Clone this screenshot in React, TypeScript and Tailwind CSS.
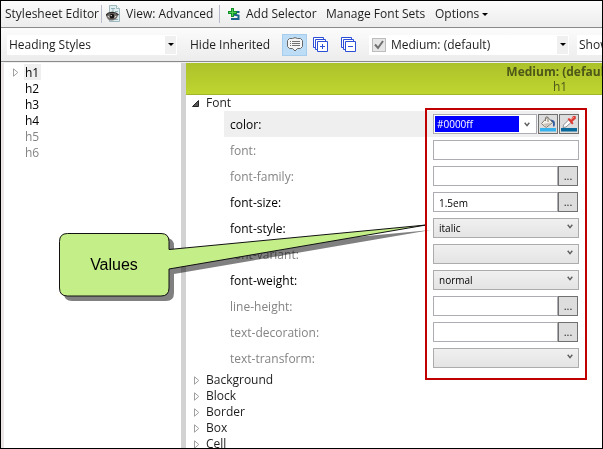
import React from "react";

type Kind = "color" | "text" | "dots" | "select";

interface Property {
  name: string;
  kind: Kind;
  value?: string;
  set?: boolean;
}

const properties: Property[] = [
  { name: "color", kind: "color", value: "#0000ff", set: true },
  { name: "font", kind: "text" },
  { name: "font-family", kind: "dots" },
  { name: "font-size", kind: "dots", value: "1.5em", set: true },
  { name: "font-style", kind: "select", value: "italic", set: true },
  { name: "font-variant", kind: "select" },
  { name: "font-weight", kind: "select", value: "normal", set: true },
  { name: "line-height", kind: "dots" },
  { name: "text-decoration", kind: "dots" },
  { name: "text-transform", kind: "select" },
];

const groups = ["Background", "Block", "Border", "Box", "Cell"];

const selectors = [
  { name: "h1", set: true, selected: true },
  { name: "h2", set: true },
  { name: "h3", set: true },
  { name: "h4", set: true },
  { name: "h5" },
  { name: "h6" },
];

function DownArrow() {
  return (
    <svg width="6" height="3" viewBox="0 0 6 3" className="shrink-0" aria-hidden="true">
      <path d="M0 0h6L3 3z" fill="#000" />
    </svg>
  );
}

function Chevron() {
  return (
    <svg width="6" height="5" viewBox="0 0 6 5" fill="none" className="shrink-0" aria-hidden="true">
      <path d="M.7.7 3 3.7 5.3.7" stroke="#606060" strokeWidth="1.4" />
    </svg>
  );
}

function Expander() {
  return (
    <svg width="6" height="9" viewBox="0 0 6 9" fill="none" className="shrink-0" aria-hidden="true">
      <path d="M.5.8v7.4L4.8 4.5z" fill="#fff" stroke="#959595" strokeWidth=".9" />
    </svg>
  );
}

function EyePageIcon() {
  return (
    <svg width="16" height="18" viewBox="0 0 16 18" aria-hidden="true">
      <path d="M3.500.5h7l3 3v13h-10z" fill="#e2eff1" stroke="#9db9bf" />
      <path d="M10.500.5v3h3" fill="#fff" stroke="#9db9bf" />
      <path d="M5 3.500h4M7 3.500v4M9 6.500h3M9 14.500h3" stroke="#8fb0b8" />
      <path d="M0 10.500C2 7.500 9 6 12 10.500c-1 3.500-3.500 5-6.500 5S1 13.500 0 10.500z" fill="#6f6b68" />
      <path d="M0 10.500C2 6.800 9 6 12.500 10" fill="none" stroke="#2b2725" strokeWidth="1.300" />
      <path d="M1.500 11.500q4.500-3 9 0-4 4-9 0z" fill="#e8e6e2" />
      <circle cx="6" cy="11.300" r="2.500" fill="#171513" />
      <circle cx="5.200" cy="10.600" r=".7" fill="#fff" />
    </svg>
  );
}

function AddSelectorIcon() {
  return (
    <svg width="12" height="13" viewBox="0 0 12 13" fill="none" aria-hidden="true">
      <path d="M11.500 4H6.500L5.500 6.500l5 1v3.500H3" stroke="#17618a" strokeWidth="2" />
      <path d="M3 0h3v3h3v3H6v3H3V6H0V3h3z" fill="#129128" />
      <path d="M4 1h1v3h3v1H5v3H4V5H1V4h3z" fill="#50ce55" />
    </svg>
  );
}

function NoteIcon() {
  return (
    <svg width="16" height="15" viewBox="0 0 16 15" fill="none" className="shrink-0" aria-hidden="true">
      <path d="M2.500 1.500h3L8 .6l2.500.9h3l2 2v6l-2 2h-3L8 14l-2.500-2.500h-3l-2-2v-6z" fill="#f5f5f5" stroke="#686868" />
      <path d="M3 4.500h1m1 0h8M3 6.500h1m1 0h8M3 8.500h1m1 0h8" stroke="#737373" />
    </svg>
  );
}

function StackIcon({ plus }: { plus?: boolean }) {
  return (
    <svg width="16" height="16" viewBox="0 0 16 16" fill="none" stroke="#2c4fd8" aria-hidden="true">
      <path d="M.5.5h10v10H.5z" fill="#fff" />
      <path d="M2.500 2.500h10v10h-10z" fill="#fff" />
      <path d="M4.500 4.500h10v10h-10z" fill="#fff" />
      <path d="M7 9.500h5" />
      {plus && <path d="M9.500 7v5" />}
    </svg>
  );
}

function BucketIcon() {
  return (
    <svg width="16" height="16" viewBox="0 0 16 16" fill="none" className="shrink-0" aria-hidden="true">
      <path d="M10 3.500q4 0 4.800 2.500.6 3-.8 5-1.500-1-1-3.500z" fill="#315fa5" />
      <path d="M1.500 7.500 7.500 1l5 5.500-6 4.800q-1.500 0-5-3.800z" fill="#f5f1e8" stroke="#827b72" />
      <path d="m3 8 8-1.500-4.500 4z" fill="#c9c2b8" />
      <path d="M5.500 5V1.500q1.500-1.500 2.500 0V6" stroke="#817b75" />
      <path d="M0 12h16v3.500H0z" fill="#36b3ed" />
    </svg>
  );
}

function DropperIcon() {
  return (
    <svg width="16" height="16" viewBox="0 0 16 16" fill="none" className="shrink-0" aria-hidden="true">
      <path d="m2 11.500.5-2.500L8 3.500l2.500 2.500L5 11z" fill="#fff" stroke="#8b9298" />
      <path d="m6.500 3 1.500-1 2 1.500L12 0h2.500L15 2.500l-3.500 3 1 2-1.500 1z" fill="#dd3c35" />
      <path d="m10 3.500 3-2.500" stroke="#f79a8d" />
      <path d="M0 12h16v3.500H0z" fill="#08699b" />
    </svg>
  );
}

function ValueEditor({ property }: { property: Property }) {
  const { name, kind, value } = property;
  if (kind === "color") {
    return (
      <div className="flex min-w-0 flex-1 gap-px">
        <div className="flex h-5 min-w-0 flex-1 border border-[#abadb3] bg-white p-px">
          <input
            id={name}
            defaultValue={value}
            className="min-w-0 flex-1 bg-[#0000ff] px-0.5 pt-px text-[10px] text-white outline-none"
          />
          <button aria-label="Choose color" className="flex w-4 items-center justify-center">
            <Chevron />
          </button>
        </div>
        <button
          aria-label="Fill color"
          className="flex h-5 w-5 items-center justify-center border border-[#707070] bg-[#dddddd]"
        >
          <BucketIcon />
        </button>
        <button
          aria-label="Pick color"
          className="flex h-5 w-5 items-center justify-center border border-[#707070] bg-[#dddddd]"
        >
          <DropperIcon />
        </button>
      </div>
    );
  }
  if (kind === "select") {
    return (
      <div className="relative min-w-0 flex-1">
        <select
          id={name}
          defaultValue={value ?? ""}
          className="block h-5 w-full appearance-none border border-[#acacac] bg-linear-to-b from-[#f0f0f0] to-[#e4e4e4] px-[5px] pt-px text-[10px] text-black outline-none"
        >
          <option value={value ?? ""}>{value ?? ""}</option>
        </select>
        <span className="pointer-events-none absolute top-1.5 right-1.5">
          <Chevron />
        </span>
      </div>
    );
  }
  return (
    <div className={kind === "dots" ? "flex min-w-0 flex-1 pr-px" : "flex min-w-0 flex-1"}>
      <input
        id={name}
        defaultValue={value}
        className="h-5 min-w-0 flex-1 border border-[#abadb3] bg-white px-[5px] pt-px text-[10px] text-black outline-none"
      />
      {kind === "dots" && (
        <button
          aria-label={"More " + name}
          className="h-5 w-5 border border-[#707070] bg-[#dddddd] text-[11px] leading-4"
        >
          ...
        </button>
      )}
    </div>
  );
}

function Callout() {
  return (
    <div className="pointer-events-none absolute -top-px -left-px">
      <svg width="603" height="449" viewBox="0 0 603 449" className="mix-blend-multiply" aria-hidden="true">
        <path
          transform="translate(5 5)"
          d="M67 233H161q8 0 8 8v8L426 225 169 269v19q0 8-8 8H67q-8 0-8-8V241q0-8 8-8z"
          fill="#808080"
        />
      </svg>
      <svg width="603" height="449" viewBox="0 0 603 449" className="absolute top-0 left-0" aria-hidden="true">
        <path
          d="M67.500 233.500H161q8 0 8 8v8L426 225 169 269v19q0 8-8 8H67.500q-8 0-8-8V241.500q0-8 8-8z"
          fill="#c4ee88"
          stroke="#111"
        />
        <path d="M426 109h160v270H426z" fill="none" stroke="#c00000" strokeWidth="2" />
      </svg>
      <p className="absolute top-[233px] left-[59px] flex h-[63px] w-[110px] items-center justify-center font-['Liberation_Sans',Arial,sans-serif] text-base text-black">
        Values
      </p>
    </div>
  );
}

export default function App() {
  return (
    <div className="relative isolate flex h-screen flex-col overflow-hidden border border-black bg-white font-['Open_Sans','Segoe_UI',sans-serif] text-xs whitespace-nowrap text-[#1e1e1e]">
      <header className="flex h-[27px] shrink-0 items-center border-b border-[#8a8a8a] bg-linear-to-b from-[#fcfcfc] to-[#ececec] pl-1">
        <h1 className="w-24">Stylesheet Editor</h1>
        <span className="h-[18px] w-px bg-[#b9bccb]" />
        <button className="flex w-[117px] items-center gap-1 pl-1">
          <EyePageIcon />
          View: Advanced
        </button>
        <span className="h-[18px] w-px bg-[#b9bccb]" />
        <button className="flex w-[106px] items-center gap-1.5 pl-2">
          <AddSelectorIcon />
          Add Selector
        </button>
        <button className="w-[109px] text-left">Manage Font Sets</button>
        <button className="flex items-center gap-[3px]">
          Options
          <DownArrow />
        </button>
      </header>

      <div className="flex h-[34px] shrink-0 items-center border-b border-[#8a8a8a] bg-linear-to-b from-[#fcfcfc] to-[#ececec] pl-1.5">
        <button className="flex h-5 w-[170px] items-center justify-between bg-white pr-px pl-0.5">
          Heading Styles
          <span className="flex h-[18px] w-[11px] items-center justify-center bg-[#f0f0f0]">
            <DownArrow />
          </span>
        </button>
        <button className="w-[105px] pl-[13px] text-left">Hide Inherited</button>
        <button
          aria-label="Show comments"
          className="flex h-[22px] w-[25px] items-center justify-center border border-[#a6cdee] bg-[#bddcf5]"
        >
          <NoteIcon />
        </button>
        <button aria-label="Expand all" className="ml-1.5 w-7">
          <StackIcon plus />
        </button>
        <button aria-label="Collapse all" className="w-7">
          <StackIcon />
        </button>
        <div className="flex h-5 w-[200px] shrink-0 items-center bg-white pr-px pl-[3px]">
          <input
            id="medium"
            type="checkbox"
            defaultChecked
            className="h-[14px] w-[14px] appearance-none border border-[#bcbcbc] bg-[#e6e6e6]"
          />
          <svg width="14" height="14" viewBox="0 0 14 14" className="pointer-events-none -ml-[14px]" fill="none" aria-hidden="true">
            <path d="m3 6.500 3 3.500 5-7" stroke="#707070" strokeWidth="2" />
          </svg>
          <label htmlFor="medium" className="flex-1 pl-[5px]">
            Medium: (default)
          </label>
          <button aria-label="Choose medium" className="flex h-[18px] w-[11px] items-center justify-center bg-[#f0f0f0]">
            <DownArrow />
          </button>
        </div>
        <button className="ml-2 flex h-5 min-w-0 flex-1 items-center overflow-hidden bg-white pl-0.5">Show</button>
      </div>

      <main className="flex min-h-0 flex-1 border-t border-[#f0f0f0]">
        <nav className="w-[185px] shrink-0 border-r-[5px] border-l-[3px] border-r-[#d2d2d2] border-l-[#ebe7e7]">
          <ul className="pt-px pl-[9px]">
            {selectors.map((s) => (
              <li key={s.name} className="flex h-4 items-center">
                <span className="w-[11px]">{s.selected && <Expander />}</span>
                <button
                  className={
                    (s.selected ? "bg-[#efefef] " : "") +
                    (s.set ? "text-black " : "text-[#848484] ") +
                    "h-4 w-[17px] pl-px text-left leading-[18px]"
                  }
                >
                  {s.name}
                </button>
              </li>
            ))}
          </ul>
        </nav>

        <section className="min-w-0 flex-1 overflow-hidden">
          <div className="flex h-8 w-[748px] flex-col items-center border-b border-[#a5b52a] bg-linear-to-b from-[#acc22a] to-[#bfd530] text-[#4d5718]">
            <h2 className="h-4 leading-[18px] font-bold">Medium: (default)</h2>
            <p className="h-4 leading-4">h1</p>
          </div>
          <button className="flex h-4 items-center pl-1.5 leading-4">
            <span className="w-[14px]">
              <svg width="7" height="7" viewBox="0 0 7 7" aria-hidden="true">
                <path d="M6.500.5v6h-6z" fill="#595959" stroke="#262626" />
              </svg>
            </span>
            Font
          </button>
          <div className="mr-[23px] ml-[38px]">
            {properties.map((p) => (
              <div
                key={p.name}
                className={(p.kind === "color" ? "bg-[#efefef] " : "") + "flex h-[26px] items-center pl-1.5"}
              >
                <label
                  htmlFor={p.name}
                  className={(p.set ? "text-black " : "text-[#848484] ") + "w-[203px] shrink-0 pt-0.5"}
                >
                  {p.name}:
                </label>
                <ValueEditor property={p} />
              </div>
            ))}
          </div>
          <ul className="pt-px">
            {groups.map((g) => (
              <li key={g}>
                <button className="flex h-4 items-center pl-2 leading-4">
                  <span className="w-3">
                    <Expander />
                  </span>
                  {g}
                </button>
              </li>
            ))}
          </ul>
        </section>
      </main>

      <Callout />
    </div>
  );
}
